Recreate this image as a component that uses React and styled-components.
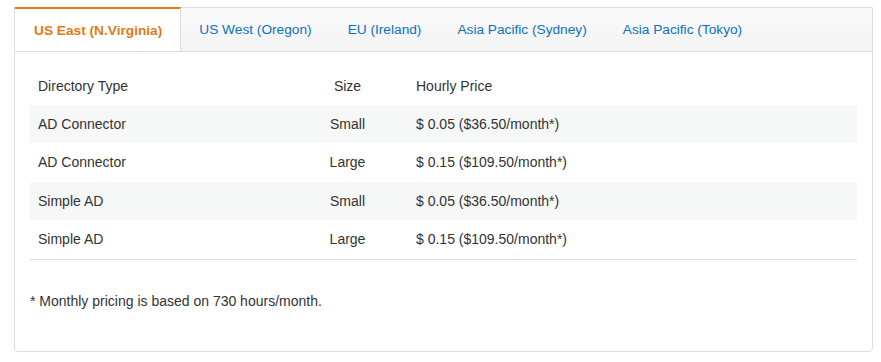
import React, { useState } from "react";
import styled, { createGlobalStyle } from "styled-components";

const GlobalStyle = createGlobalStyle`
  body {
    margin: 0;
    background: #fff;
    font-family: "Liberation Sans", Arial, sans-serif;
    font-size: 14px;
    color: #333;
  }
`

const Page = styled.div`
  padding: 7px 8px 10px 14px;
`
const Panel = styled.div`
  width: 857px;
  border: 1px solid #ddd;
  border-radius: 0 0 4px 4px;
`
const TabBar = styled.ul`
  display: flex;
  margin: 0;
  padding: 0;
  list-style: none;
  height: 43px;
  background: linear-gradient(#fafafa, #f3f3f3);
  border-bottom: 1px solid #ddd;
`
const Tab = styled.li`
  display: flex;
  align-items: center;
  padding: 0 18px;
  height: ${({active}) => active ? '44px' : '43px'};
  margin-top: ${({active}) => active ? '-1px' : '0'};
  box-sizing: border-box;
  cursor: pointer;
  font-size: 13.7px;
  color: ${({active}) => active ? '#e47911' : '#0a72c1'};
  font-weight: ${({active}) => active ? 'bold' : 'normal'};
  background: ${({active}) => active ? '#fff' : 'transparent'};
  border-top: ${({active}) => active ? '2px solid #e47911' : 'none'};
  border-right: ${({active}) => active ? '1px solid #ddd' : 'none'};
  padding-left: ${({active}) => active ? '19px' : '18px'};
`
const Body = styled.div`
  padding: 15px 15px 42px;
`
const Table = styled.table`
  width: 100%;
  border-collapse: collapse;
  border-bottom: 1px solid #ddd;
`
const Row = styled.tr`
  background: ${({striped}) => striped ? '#f6f7f7' : '#fff'};
`
const Cell = styled.td`
  padding: 11px 8px;
  line-height: 16.5px;
  text-align: ${({center}) => center ? 'center' : 'left'};
  width: ${({w}) => w || 'auto'};
`
const HeadCell = styled(Cell).attrs({as: 'th'})`
  font-weight: normal;
  padding: 11px 8px 10px;
`
const Note = styled.p`
  margin: 33px 0 0;
  line-height: 16px;
`

const regions = [
  'US East (N.Virginia)',
  'US West (Oregon)',
  'EU (Ireland)',
  'Asia Pacific (Sydney)',
  'Asia Pacific (Tokyo)',
]

const rows = [
  {type: 'AD Connector', size: 'Small', price: '$ 0.05 ($36.50/month*)'},
  {type: 'AD Connector', size: 'Large', price: '$ 0.15 ($109.50/month*)'},
  {type: 'Simple AD', size: 'Small', price: '$ 0.05 ($36.50/month*)'},
  {type: 'Simple AD', size: 'Large', price: '$ 0.15 ($109.50/month*)'},
]

export default function App() {
  const [active, setActive] = useState(0)

  return (
    <Page>
      <GlobalStyle/>
      <Panel>
        <TabBar>
          {regions.map((name, i) => (
            <Tab key={name} active={i === active} onClick={() => setActive(i)}>{name}</Tab>
          ))}
        </TabBar>
        <Body>
          <Table>
            <thead>
              <Row>
                <HeadCell w="241px">Directory Type</HeadCell>
                <HeadCell w="105px" center>Size</HeadCell>
                <HeadCell>Hourly Price</HeadCell>
              </Row>
            </thead>
            <tbody>
              {rows.map((r, i) => (
                <Row key={i} striped={i % 2 === 0}>
                  <Cell>{r.type}</Cell>
                  <Cell center>{r.size}</Cell>
                  <Cell>{r.price}</Cell>
                </Row>
              ))}
            </tbody>
          </Table>
          <Note>* Monthly pricing is based on 730 hours/month.</Note>
        </Body>
      </Panel>
    </Page>
  )
}
